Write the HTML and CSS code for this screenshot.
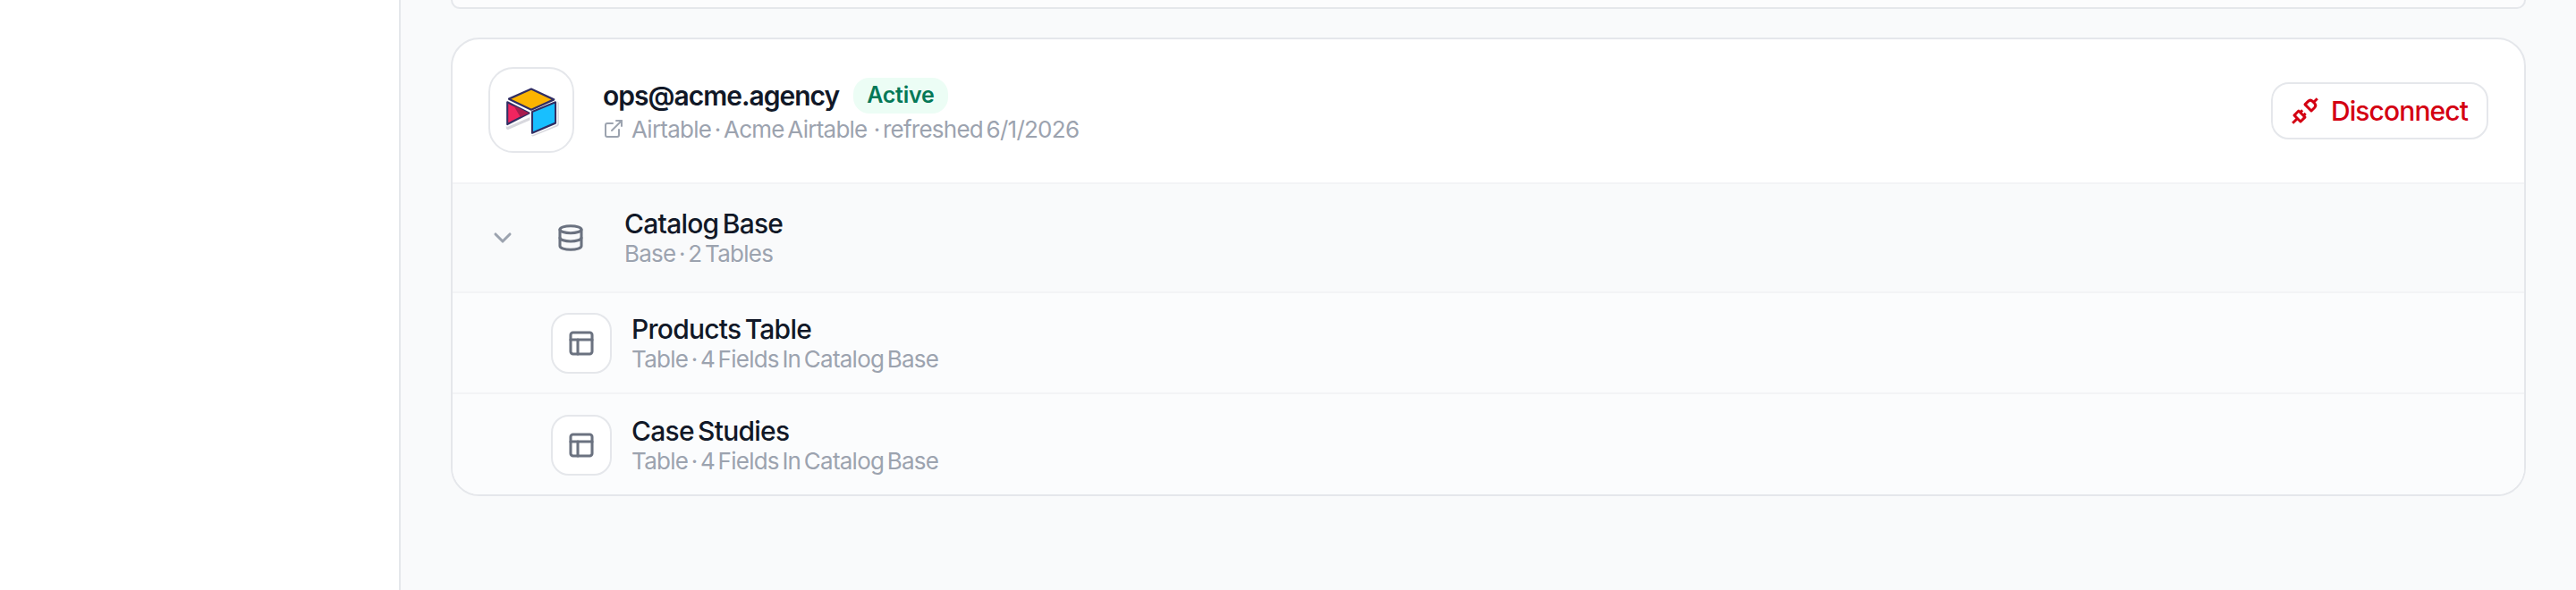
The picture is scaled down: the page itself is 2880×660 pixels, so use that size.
FILE: index.html
```html
<!DOCTYPE html>
<html lang="en">
<head>
  <meta charset="UTF-8">
  <meta name="viewport" content="width=device-width, initial-scale=1.0">
  <title>Connections</title>
  <link rel="stylesheet" href="styles.css">
</head>
<body>
  <div class="shell">
    <aside class="sidebar"></aside>
    <main class="main">
      <div class="card card-cut"></div>

      <section class="card">
        <header class="account">
          <div class="logo-box">
            <svg class="logo" viewBox="130 110 190 165" preserveAspectRatio="none" aria-hidden="true">
              <g class="logo-shadow">
                <path d="M150 155 222 125 295 157 303 165V228L225 258V205L145 238V165Z"/>
              </g>
              <g class="logo-halo">
                <path d="M150 155 222 125 295 157 300 165V228L225 258V200L145 232V165Z"/>
              </g>
              <path class="logo-red" d="M145 165 215 198 145 232Z"/>
              <path class="logo-red-dark" d="M165 175 215 198 187 210Z"/>
              <path class="logo-yellow" d="M150 155 222 125 295 157 222 188Z"/>
              <path class="logo-blue" d="M225 194 300 165V228L225 258Z"/>
            </svg>
          </div>
          <div class="account-text">
            <div class="account-title">
              <span class="email">ops@acme.agency</span>
              <span class="badge">Active</span>
            </div>
            <div class="account-sub">
              <svg class="icon-link" viewBox="0 0 24 24" aria-hidden="true">
                <path d="M15 3h6v6"/>
                <path d="M10 14 21 3"/>
                <path d="M18 13v6a2 2 0 0 1-2 2H5a2 2 0 0 1-2-2V8a2 2 0 0 1 2-2h6"/>
              </svg>
              <span>Airtable · Acme Airtable &nbsp;· refreshed 6/1/2026</span>
            </div>
          </div>
          <button class="disconnect" type="button">
            <svg class="icon-plug" viewBox="0 0 30 30" aria-hidden="true">
              <g transform="rotate(-45 15 15)">
                <path d="M-4.5 15H3"/>
                <path d="M3 10h7v10H3Z"/>
                <path d="M10 12.5h3.5"/>
                <path d="M10 17.5h3.5"/>
                <path d="M20 10h5q3.5 0 3.5 3.5v3q0 3.5-3.5 3.5h-5Z"/>
                <path d="M28.5 15h6"/>
              </g>
            </svg>
            Disconnect
          </button>
        </header>

        <div class="row row-base">
          <svg class="icon chevron" viewBox="0 0 24 24" aria-hidden="true">
            <path d="m6 9 6 6 6-6"/>
          </svg>
          <svg class="icon db" viewBox="0 0 24 24" aria-hidden="true">
            <ellipse cx="12" cy="5" rx="9" ry="3"/>
            <path d="M3 5V19A9 3 0 0 0 21 19V5"/>
            <path d="M3 12A9 3 0 0 0 21 12"/>
          </svg>
          <div class="row-text">
            <div class="row-title">Catalog Base</div>
            <div class="row-sub">Base · 2 Tables</div>
          </div>
        </div>

        <div class="row row-table">
          <div class="table-box">
            <svg class="icon" viewBox="0 0 24 24" aria-hidden="true">
              <rect x="3" y="3" width="18" height="18" rx="2"/>
              <path d="M3 9h18"/>
              <path d="M9 21V9"/>
            </svg>
          </div>
          <div class="row-text">
            <div class="row-title">Products Table</div>
            <div class="row-sub">Table · 4 Fields In Catalog Base</div>
          </div>
        </div>

        <div class="row row-table row-last">
          <div class="table-box">
            <svg class="icon" viewBox="0 0 24 24" aria-hidden="true">
              <rect x="3" y="3" width="18" height="18" rx="2"/>
              <path d="M3 9h18"/>
              <path d="M9 21V9"/>
            </svg>
          </div>
          <div class="row-text">
            <div class="row-title">Case Studies</div>
            <div class="row-sub">Table · 4 Fields In Catalog Base</div>
          </div>
        </div>
      </section>
    </main>
  </div>
</body>
</html>
```

FILE: styles.css
```css
* {
  box-sizing: border-box;
}

html, body {
  margin: 0;
  height: 100%;
}

body {
  font-family: 'Inter', 'Liberation Sans', sans-serif;
  color: #111827;
  background: #f9fafb;
  overflow: hidden;
}

.shell {
  display: flex;
  height: 660px;
}

.sidebar {
  width: 448px;
  flex: none;
  background: #ffffff;
  border-right: 2px solid #e5e7eb;
}

.main {
  flex: 1;
  padding: 0 56px;
  display: flex;
  flex-direction: column;
  gap: 32px;
}

.card {
  background: #ffffff;
  border: 2px solid #e5e7eb;
  border-radius: 32px;
  overflow: hidden;
}

.card-cut {
  height: 10px;
  border-top: none;
  border-radius: 0 0 32px 32px;
  background: #fcfcfd;
}

.account {
  display: flex;
  align-items: center;
  gap: 32px;
  height: 162px;
  padding: 0 40px 2px;
  border-bottom: 2px solid #f3f4f6;
}

.logo-box {
  width: 96px;
  height: 96px;
  flex: none;
  display: flex;
  align-items: center;
  justify-content: center;
  background: #ffffff;
  border: 2px solid #e5e7eb;
  border-radius: 28px;
}

.logo {
  width: 66px;
  height: 61px;
  margin: 3px 0 0 2px;
}

.logo-shadow path {
  fill: #d8d8de;
  stroke: #d8d8de;
  stroke-width: 12;
  stroke-linejoin: round;
  transform: translate(2px, 4px);
}

.logo-halo path {
  fill: #ffffff;
  stroke: #ffffff;
  stroke-width: 14;
  stroke-linejoin: round;
}

.logo-red, .logo-yellow, .logo-blue {
  stroke: #312e63;
  stroke-width: 6;
  stroke-linejoin: round;
}

.logo-red {
  fill: #f0255f;
}

.logo-red-dark {
  fill: #a81c4e;
}

.logo-yellow {
  fill: #fcb400;
}

.logo-blue {
  fill: #18bfff;
}

.account-text {
  flex: 1;
  display: flex;
  flex-direction: column;
  gap: 2px;
}

.account-title {
  display: flex;
  align-items: center;
  gap: 16px;
}

.email {
  font-size: 30px;
  font-weight: 600;
  letter-spacing: -1px;
}

.badge {
  padding: 2px 15px 4px;
  font-size: 25px;
  font-weight: 600;
  line-height: 34px;
  letter-spacing: -0.2px;
  color: #047857;
  background: #ecfdf5;
  border-radius: 18px;
}

.account-sub {
  display: flex;
  align-items: center;
  gap: 8px;
  font-size: 26px;
  color: #9ca3af;
  letter-spacing: -0.75px;
  word-spacing: -3px;
}

.icon-link {
  width: 24px;
  height: 24px;
  fill: none;
  stroke: #9ca3af;
  stroke-width: 2;
  stroke-linecap: round;
  stroke-linejoin: round;
}

.disconnect {
  display: flex;
  align-items: center;
  gap: 14px;
  height: 64px;
  margin-top: 2px;
  padding: 0 21px;
  font: 500 30px 'Inter', 'Liberation Sans', sans-serif;
  letter-spacing: -0.9px;
  color: #d40012;
  background: #ffffff;
  border: 2px solid #e5e7eb;
  border-radius: 20px;
}

.icon-plug {
  width: 30px;
  height: 30px;
  fill: none;
  stroke: #d40012;
  stroke-width: 3;
  stroke-linecap: butt;
  stroke-linejoin: round;
  overflow: visible;
}

.row {
  display: flex;
  align-items: center;
  border-bottom: 2px solid #f3f4f6;
  background: #fbfcfd;
}

.row-base {
  height: 122px;
  padding-left: 40px;
  background: #f9fafb;
}

.row-table {
  height: 113px;
  padding-left: 110px;
  gap: 22px;
}

.row-last {
  height: 112px;
  padding-top: 1px;
  border-bottom: none;
}

.row-base .chevron {
  stroke: #9ca3af;
  margin-right: 44px;
}

.row-base .db {
  margin-right: 44px;
}

.icon {
  width: 32px;
  height: 32px;
  flex: none;
  fill: none;
  stroke: #6b7280;
  stroke-width: 2.3;
  stroke-linecap: round;
  stroke-linejoin: round;
}

.table-box {
  width: 68px;
  height: 68px;
  flex: none;
  display: flex;
  align-items: center;
  justify-content: center;
  background: #ffffff;
  border: 2px solid #e5e7eb;
  border-radius: 20px;
}

.row-title {
  font-size: 30px;
  font-weight: 500;
  line-height: 36px;
  letter-spacing: -0.75px;
  word-spacing: -3px;
}

.row-sub {
  font-size: 26px;
  line-height: 32px;
  color: #9ca3af;
  letter-spacing: -0.75px;
  word-spacing: -3px;
}
```
